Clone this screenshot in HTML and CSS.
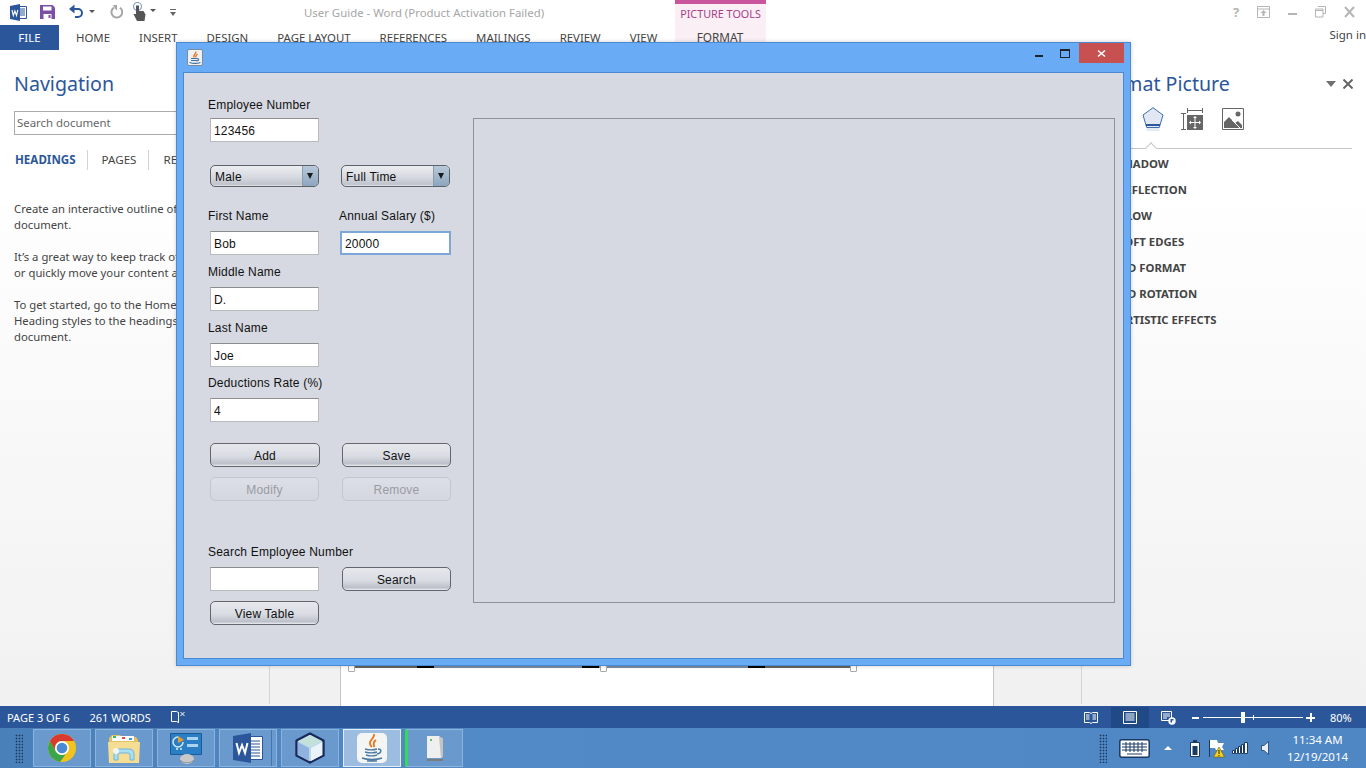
FILE: index.html
```html
<!DOCTYPE html>
<html>
<head>
<title>User Guide - Word</title>
<link rel="stylesheet" href="styles.css">
</head>
<body>

<div class="word">
  <div class="ribbon">
    <div class="ribbonLeft">
      <div class="quickBar">
        <svg class="qaWord" width="17" height="17" viewBox="0 0 17 17"><path fill="#fff" stroke="#2b579a" d="M8.5 2.5h8v12h-8z"/><path stroke="#2b579a" d="M10 5h5M10 7h5M10 9h5M10 11h5"/><path fill="#2b579a" d="M0 2l10-2v17l-10-2z"/><path fill="none" stroke="#fff" stroke-width="1.1" d="M2 6l1.3 5.500 1.600-4.500 1.600 4.500L7.800 6"/></svg>
        <svg class="qaSave" width="15" height="14" viewBox="0 0 15 14"><path fill="#7b4fa6" d="M0 0h12.500L15 2.500V14H0z"/><path fill="#fff" d="M3 1.500h8.500v4H3zM3.500 9h8v5h-8z"/><path fill="#7b4fa6" d="M8.500 10h2v3h-2z"/></svg>
        <svg class="qaUndo" width="15" height="14" viewBox="0 0 15 14"><path fill="none" stroke="#2b579a" stroke-width="2" d="M2 5h7a4 4 0 0 1 0 8H6"/><path fill="#2b579a" d="M5.500 0.500v9L0 5z"/></svg>
        <span class="caret qaCaret1"></span>
        <svg class="qaRedo" width="13" height="14" viewBox="0 0 13 14"><path fill="none" stroke="#a6a6a6" stroke-width="2" d="M4 2.600a5.400 5.400 0 1 0 6 .2"/><path fill="#a6a6a6" d="M3 0h4v5H6z"/></svg>
        <svg class="qaTouch" width="15" height="19" viewBox="0 0 15 19"><circle cx="5.500" cy="4.500" r="4" fill="none" stroke="#8aa3c4" stroke-width="1.200"/><path fill="#555" d="M4 3.500h3V9h4.500l2 3.500-1 6.500H5L1.500 12 4 12z"/></svg>
        <span class="caret qaCaret2"></span>
        <svg class="qaMore" width="6" height="7" viewBox="0 0 6 7"><path fill="#666" d="M0 0h6v1H0zM0 3h6L3 7z"/></svg>
        <div class="docTitle">User Guide - Word (Product Activation Failed)</div>
      </div>
      <div class="tabRow">
        <div class="fileTab">FILE</div>
        <div class="tabs">
          <span>HOME</span><span>INSERT</span><span>DESIGN</span><span>PAGE LAYOUT</span><span>REFERENCES</span><span>MAILINGS</span><span>REVIEW</span><span>VIEW</span>
        </div>
      </div>
    </div>
    <div class="contextTab">
      <div class="contextTitle">PICTURE TOOLS</div>
      <div class="contextFormat">FORMAT</div>
    </div>
    <div class="ribbonRight">
      <div class="windowIcons">
        <span class="helpMark">?</span>
        <svg width="13" height="12" viewBox="0 0 13 12"><path fill="none" stroke="#b5b5b5" d="M.5.500h12v11H.5zM.5 3h12"/><path fill="#b5b5b5" d="M6.500 4l3 3H7.500v3h-2V7H3.500z"/></svg>
        <svg width="9" height="12" viewBox="0 0 9 12"><path fill="#b5b5b5" d="M0 7h9v2H0z"/></svg>
        <svg width="11" height="12" viewBox="0 0 11 12"><path fill="none" stroke="#b5b5b5" d="M3 .500h7.500v7H8M.5 3h7.500v8H.5z"/><path stroke="#b5b5b5" d="M.5 4.500h7.500"/></svg>
        <svg width="11" height="12" viewBox="0 0 11 12"><path stroke="#b5b5b5" stroke-width="2" d="M1 1l9 10M10 1L1 11"/></svg>
      </div>
      <div class="signIn">Sign in</div>
    </div>
  </div>

  <div class="workArea">
    <div class="navPane">
      <div class="paneTitle">Navigation</div>
      <div class="navSearch">Search document</div>
      <div class="navTabs">
        <span class="navTabOn">HEADINGS</span><span class="navTab">PAGES</span><span class="navTab">RE</span>
      </div>
      <p>Create an interactive outline of<br>document.</p>
      <p>It&rsquo;s a great way to keep track of<br>or quickly move your content a</p>
      <p>To get started, go to the Home<br>Heading styles to the headings<br>document.</p>
    </div>

    <div class="docArea">
      <div class="page">
        <div class="pictureEdge">
          <i class="edgeDark e1"></i><i class="edgeBlack"></i><i class="edgeBlue e2"></i><i class="edgeBlack"></i><i class="edgeBlue e3"></i><i class="edgeBlack"></i><i class="edgeDark e4"></i>
          <b class="handle h1"></b><b class="handle h2"></b><b class="handle h3"></b>
        </div>
      </div>
    </div>

    <div class="formatPane">
      <div class="formatHead">
        <div class="paneTitle">Format Picture</div>
        <svg class="paneMenu" width="10" height="6" viewBox="0 0 10 6"><path fill="#707070" d="M0 0h10L5 6z"/></svg>
        <svg class="paneClose" width="10" height="10" viewBox="0 0 10 10"><path stroke="#666" stroke-width="2" d="M.5.500l9 9M9.500.500l-9 9"/></svg>
      </div>
      <div class="formatIcons">
        <svg class="fiShape" width="22" height="24" viewBox="0 0 22 24"><path fill="#e2e8f3" stroke="#3f6cae" d="M11 .7l10 7.300-3.700 12.500H4.700L1 8z"/><path fill="#2b579a" d="M4 17h14v2H4z"/><path fill="#e6ebf3" d="M5 21h12l1 3H4z"/></svg>
        <svg class="fiSize" width="23" height="23" viewBox="0 0 23 23"><path stroke="#666" fill="none" d="M6 2.500h16M6.500 0v5M21.500 0v5M0 5.500h5M0 21.500h5M2.500 5.500v16"/><path fill="#666" d="M6 7h16v15H6z"/><path stroke="#fff" d="M14 9.500v10M9 14.500h10"/><path fill="#fff" d="M14 8l2 2h-4zM14 21l2-2h-4zM8 14.500l2-2v4zM20 14.500l-2-2v4z"/></svg>
        <svg class="fiImage" width="22" height="22" viewBox="0 0 22 22"><path fill="#fff" stroke="#666" d="M.5.500h21v21H.5z"/><circle cx="16" cy="6" r="2.500" fill="#666"/><path fill="#666" d="M2 20v-6l5-5 6 6 3-2 4 4v3z"/><path stroke="#fff" d="M10 12l8 8"/></svg>
      </div>
      <div class="formatRule"><span class="notch"></span></div>
      <div class="formatList">
        <div>SHADOW</div><div>REFLECTION</div><div>GLOW</div><div>SOFT EDGES</div><div>3-D FORMAT</div><div>3-D ROTATION</div><div>ARTISTIC EFFECTS</div>
      </div>
    </div>
  </div>

  <div class="statusBar">
    <span class="statusPage">PAGE 3 OF 6</span>
    <span class="statusWords">261 WORDS</span>
    <svg class="statusBook" width="15" height="14" viewBox="0 0 15 14"><path fill="none" stroke="#fff" d="M.5 1.500h5l2 1v10l-2-1h-5zM7.500 2.500v1M7.500 8v4.500"/><path stroke="#fff" d="M9.500 2l4 4M13.500 2l-4 4"/></svg>
    <div class="statusRight">
      <svg class="viewRead" width="14" height="14" viewBox="0 0 14 14"><path fill="none" stroke="#fff" d="M.5 1.500h5L7 2.500l1.500-1h5v10h-5L7 12.500l-1.500-1h-5zM2 4h3.500M2 6h3.500M2 8h3.500M8.500 4H12M8.500 6H12M8.500 8H12"/></svg>
      <div class="viewPrint"><svg width="14" height="13" viewBox="0 0 14 13"><path fill="none" stroke="#fff" d="M.5.500h13v12H.5zM2.500 3h9M2.500 5h9M2.500 7h9M2.500 9h9"/></svg></div>
      <svg class="viewWeb" width="15" height="14" viewBox="0 0 15 14"><path fill="none" stroke="#fff" d="M.5.500h10v9H.5zM2 3h7M2 5h7M2 7h4"/><circle cx="11" cy="10" r="3.700" fill="#fff"/><path fill="#2b579a" d="M9.500 8h3v1.500h-1.500v2H9.500z"/></svg>
      <span class="zoomMinus"></span>
      <div class="zoomTrack"><span class="zoomTick"></span><span class="zoomThumb"></span></div>
      <span class="zoomPlus"></span>
      <span class="zoomValue">80%</span>
    </div>
  </div>
</div>

<div class="taskbar">
  <div class="grip gripLeft"></div>
  <div class="taskButtons">
    <div class="taskBtn">
      <svg width="28" height="28" viewBox="0 0 28 28"><circle cx="14" cy="14" r="14" fill="#f2c31c"/><path fill="#d9392f" d="M14 0a14 14 0 0 1 12.100 7H14a7 7 0 0 0-6.100 10.500L1.900 7A14 14 0 0 1 14 0z"/><path fill="#3aa54a" d="M1.900 7l6 10.500A7 7 0 0 0 18 19.700l-6 8.200A14 14 0 0 1 1.900 7z"/><circle cx="14" cy="14" r="7" fill="#fff"/><circle cx="14" cy="14" r="5.300" fill="#4a8ad4"/></svg>
    </div>
    <div class="taskBtn">
      <svg width="32" height="30" viewBox="0 0 32 30"><path fill="#e3c165" d="M1 5l3-3h8l2 2h14l2 3v8H1z"/><path fill="#fff" d="M4 3h22v5H4z"/><path fill="#45b455" d="M5 3h3v2H5z"/><path fill="#d9503f" d="M14 4h3v2h-3z"/><path fill="#3d9bd8" d="M21 5h3v2h-3z"/><path fill="#f5dd94" d="M0 9h32l-1 21H1z"/><path fill="#a9dff0" stroke="#6fb6d8" d="M6 27v-6q0-5 5-5h10q5 0 5 5v6h-4v-5q0-2-2-2h-8q-2 0-2 2v5z"/><circle cx="8" cy="18" r="3" fill="#fff" opacity=".8"/></svg>
    </div>
    <div class="taskBtn">
      <svg width="32" height="32" viewBox="0 0 32 32"><path fill="#2a7fc4" stroke="#1c5c96" d="M.5 1.500h31v21H.5z"/><path fill="none" stroke="#d5ecfa" stroke-width="1.500" d="M8 5a5 5 0 1 0 5 5"/><path fill="#f09a2a" d="M8 4l6 4-6 3z"/><path fill="#a8d4f2" d="M17 5h11v3H17zM17 12h11v3H17zM6 16h2v2H6zM10 16h2v2h-2z"/><ellipse cx="17" cy="27" rx="7" ry="5" fill="#c8c8c8"/><path fill="#777" d="M10 28q7 5 14 0v1q-7 4-14 0z"/></svg>
    </div>
    <div class="taskBtn taskBtnStack">
      <svg width="30" height="30" viewBox="0 0 30 30"><path fill="#fff" stroke="#2b579a" d="M14 3.500h15.500v23H14z"/><path stroke="#2b579a" stroke-width="1.200" d="M18 8h9M18 11h9M18 14h9M18 17h9M18 20h9M18 23h9"/><path fill="#2b579a" d="M0 3l18-3v30L0 27z"/><path fill="none" stroke="#fff" stroke-width="2" d="M3.500 10l2.500 10 3-8 3 8 2.500-10"/></svg>
    </div>
    <div class="taskBtn">
      <svg width="32" height="32" viewBox="0 0 32 32"><path fill="#bcd9e6" stroke="#1a2a5c" stroke-width="2.400" stroke-linejoin="round" d="M16 1.500l13.500 7v15L16 30.500l-13.500-7v-15z"/><path fill="#c4e0da" d="M16 3l11.500 6L16 15 4.500 9z"/><path fill="#8fb2e0" d="M3.700 10L15 16v13L3.700 23z"/><path fill="#eaf2fa" d="M17 16l11.300-6v13L17 29z"/></svg>
    </div>
    <div class="taskBtn taskBtnActive">
      <div class="javaTile">
        <svg width="22" height="30" viewBox="0 0 22 30"><path fill="none" stroke="#e8761f" stroke-width="1.800" d="M13 1c1 4-5 6-4 10 .4 1.500 1.500 2.500 2 3M15 7c-3 2-3 4-1.500 7"/><path fill="none" stroke="#4c7ba4" stroke-width="1.400" d="M4 16c4 1 9 1 12 0M4 19c4 1 9 1 12 0M17 16c4 0 4 4-1 5M5 22c3 1 8 1 11 0M1 25c5 2 15 2 20 0M6 28h10"/></svg>
      </div>
    </div>
    <div class="taskBtn taskBtnOpen">
      <svg width="20" height="26" viewBox="0 0 20 26"><path fill="#7c7c7c" d="M2 24h16v2H2z"/><path fill="#efefef" d="M2 1h12l2 2v20H2z"/><path fill="#c4c4c4" d="M14 2l4 1v19l-2 1z"/><path fill="#60c070" d="M5 4h2v2H5z"/></svg>
    </div>
  </div>
  <div class="trayArea">
    <div class="grip"></div>
    <svg class="trayKeys" width="31" height="19" viewBox="0 0 31 19"><rect x=".8" y=".8" width="29.400" height="17.400" rx="2" fill="#fff" stroke="#1b3a63" stroke-width="1.500"/><path stroke="#1b3a63" d="M3 5h25M3 8h25M3 11h25M7 3v10M11 3v10M15 3v10M19 3v10M23 3v10M8 15h15"/></svg>
    <span class="trayCaret"></span>
    <svg class="trayBattery" width="10" height="17" viewBox="0 0 10 17"><path fill="#fff" stroke="#1b3a63" d="M.5 2.500h9v14h-9z"/><path fill="#1b3a63" d="M3 0h4v2H3zM2.500 6h5v9h-5z"/></svg>
    <svg class="trayFlag" width="17" height="19" viewBox="0 0 17 19"><path fill="#fff" stroke="#1b3a63" d="M1.500 1v17"/><path fill="#fff" d="M2 1h7l1 3h6l-2 4 2 3H8l-1-2H2z"/><path fill="#f5d21f" stroke="#6b5a10" stroke-width=".6" d="M11 8l5.500 10H5.500z"/><path stroke="#222" d="M11 11v4M11 16v1.200"/></svg>
    <svg class="traySignal" width="16" height="12" viewBox="0 0 16 12"><path fill="#fff" stroke="#1b3a63" d="M.5 8.500h2v3h-2zM3.500 6.500h2v5h-2zM6.500 4.500h2v7h-2zM9.500 2.500h2v9h-2zM12.500.5h3v11h-3z"/></svg>
    <svg class="traySpeaker" width="8" height="14" viewBox="0 0 8 14"><path fill="#e8eef5" stroke="#1b3a63" stroke-width=".8" d="M.5 4.500H3L7.500.5v13L3 9.500H.5z"/></svg>
    <div class="clock">11:34 AM<br>12/19/2014</div>
  </div>
</div>

<div class="javaWindow">
  <div class="javaTitle">
    <div class="javaIcon">
      <svg width="12" height="13" viewBox="0 0 12 13"><path fill="none" stroke="#e8761f" stroke-width="1.300" d="M7 .5C7 3 4 3.500 5 6.500M8.500 3C7 4 6.500 5 7 6.500"/><path fill="none" stroke="#3f6f9c" stroke-width="1.100" d="M2 7.500h6M2 9.500h6M8 7.500c2.500 0 2 2-.5 2.500M.5 11.500c3 1 8 1 11 0"/></svg>
    </div>
    <div class="javaControls">
      <span class="ctlMin"></span>
      <span class="ctlMax"></span>
      <div class="ctlClose">
        <svg width="9" height="9" viewBox="0 0 9 9"><path stroke="#fff" stroke-width="1.600" d="M1 1.500l7 6M8 1.500l-7 6"/></svg>
      </div>
    </div>
  </div>

  <div class="javaContent">
    <div class="empForm">
      <div class="lbl">Employee Number</div>
      <div class="field gapInput">123456</div>

      <div class="row gapCombo">
        <div class="combo"><span class="comboText">Male</span><span class="comboArrow"></span></div>
        <div class="combo"><span class="comboText">Full Time</span><span class="comboArrow"></span></div>
      </div>

      <div class="row gapSalary">
        <div class="lbl cell">First Name</div>
        <div class="lbl cell cellRight">Annual Salary ($)</div>
      </div>
      <div class="row gapInputBig">
        <div class="field">Bob</div>
        <div class="field fieldFocus">20000</div>
      </div>

      <div class="lbl gapLabel">Middle Name</div>
      <div class="field gapInputBig">D.</div>

      <div class="lbl gapLabel">Last Name</div>
      <div class="field gapInputBig">Joe</div>

      <div class="lbl gapLabelTight">Deductions Rate (%)</div>
      <div class="field gapInputBig">4</div>

      <div class="row gapAdd">
        <button class="btn btnAdd">Add</button>
        <button class="btn">Save</button>
      </div>
      <div class="row rowWide gapBtn">
        <button class="btn btnOff">Modify</button>
        <button class="btn btnOff">Remove</button>
      </div>

      <div class="lbl gapSearch">Search Employee Number</div>
      <div class="row rowWide gapInputBig">
        <div class="field"></div>
        <button class="btn">Search</button>
      </div>
      <button class="btn gapBtn">View Table</button>
    </div>

    <div class="tablePanel"></div>
  </div>
</div>

</body>
</html>
```

FILE: styles.css
```css
html, body {
	margin: 0;
	padding: 0;
}

body {
	position: relative;
	width: 1366px;
	height: 768px;
	overflow: hidden;
	font-family: "Noto Sans", sans-serif;
	background-color: #fff;
}

.word {
	display: flex;
	flex-direction: column;
	height: 728px;
}

/* ribbon */
.ribbon {
	display: flex;
	height: 50px;
	font-size: 11.5px;
	color: #444;
}
.ribbonLeft { width: 675px; }
.quickBar {
	position: relative;
	height: 25px;
}
.quickBar svg, .quickBar .caret { position: absolute; }
.qaWord { left: 10px; top: 4px; }
.qaSave { left: 40px; top: 5px; }
.qaUndo { left: 69px; top: 4px; }
.qaCaret1 { left: 89px; top: 10px; }
.qaRedo { left: 110px; top: 5px; }
.qaTouch { left: 132px; top: 2px; }
.qaCaret2 { left: 150px; top: 9px; }
.qaMore { left: 170px; top: 9px; }
.caret {
	width: 0;
	height: 0;
	border-left: 3px solid transparent;
	border-right: 3px solid transparent;
	border-top: 3px solid #555;
}
.docTitle {
	position: absolute;
	left: 304px;
	top: 4px;
	font-size: 11.4px;
	line-height: 18px;
	color: #a6a6a6;
	white-space: nowrap;
}
.tabRow {
	display: flex;
	height: 25px;
	line-height: 25px;
}
.fileTab {
	width: 59px;
	text-align: center;
	color: #fff;
	background-color: #2b579a;
}
.tabs {
	display: flex;
	gap: 29px;
	margin-left: 17px;
	font-size: 11.4px;
	white-space: nowrap;
}
.contextTab {
	width: 91px;
	text-align: center;
	background-color: #faeff5;
	border-top: 4px solid #c9559d;
	box-sizing: border-box;
}
.contextTitle {
	height: 21px;
	line-height: 20px;
	font-size: 10.8px;
	color: #ab3d88;
}
.contextFormat {
	line-height: 25px;
	margin-left: -1px;
	font-size: 11.8px;
}
.ribbonRight { flex: 1; }
.windowIcons {
	display: flex;
	align-items: center;
	gap: 18px;
	height: 24px;
	margin-left: 465px;
}
.helpMark {
	width: 10px;
	font-size: 13px;
	font-weight: bold;
	text-align: center;
	color: #b5b5b5;
	margin-right: -2px;
}
.signIn {
	text-align: right;
	line-height: 22px;
	color: #444;
	white-space: nowrap;
}

/* panes */
.workArea {
	flex: 1;
	display: flex;
	min-height: 0;
}
.navPane {
	box-sizing: border-box;
	width: 269px;
	padding: 21px 0 0 14px;
	background: linear-gradient(#fff 20%, #f1f1f1);
	color: #444;
	font-size: 11.3px;
	line-height: 16px;
	white-space: nowrap;
	overflow: hidden;
}
.navPane p { margin: 0 0 16px 0; }
.paneTitle {
	font-size: 19.6px;
	line-height: 26px;
	color: #2b579a;
	white-space: nowrap;
}
.navSearch {
	box-sizing: border-box;
	width: 240px;
	height: 24px;
	margin-top: 14px;
	padding-left: 2px;
	line-height: 22px;
	font-size: 11.4px;
	color: #666;
	background-color: #fff;
	border: 1px solid #ababab;
}
.navTabs {
	display: flex;
	height: 20px;
	margin: 15px 0 31px 1px;
	line-height: 20px;
	font-size: 11.6px;
}
.navTabOn {
	font-weight: bold;
	color: #2b579a;
	padding-right: 11px;
}
.navTab {
	padding: 0 12px 0 14px;
	border-left: 1px solid #d4d4d4;
}
.docArea {
	width: 813px;
	padding-left: 71px;
	box-sizing: border-box;
	background:
		linear-gradient(#d4d4d4, #d4d4d4) left top / 1px calc(100% - 2px) no-repeat,
		linear-gradient(#d4d4d4, #d4d4d4) right top / 1px calc(100% - 2px) no-repeat,
		#f1f1f1;
}
.page {
	box-sizing: border-box;
	width: 654px;
	height: 656px;
	padding-top: 615px;
	background-color: #fff;
	border-left: 1px solid #c6c6c6;
	border-right: 1px solid #c6c6c6;
}
.pictureEdge {
	position: relative;
	display: flex;
	height: 3px;
	margin-left: 14px;
	width: 496px;
}
.pictureEdge i { display: block; height: 3px; }
.edgeDark { background-color: #66625e; }
.edgeBlue { background-color: #7a8ea6; }
.edgeBlack { background-color: #000; width: 17px; }
.e1 { width: 62px; }
.e2 { width: 148px; }
.e3 { width: 149px; }
.e4 { width: 86px; }
.handle {
	position: absolute;
	top: 0;
	width: 5px;
	height: 5px;
	background-color: #fff;
	border: 1px solid #a9a9a9;
	border-radius: 1px;
}
.h1 { left: -7px; }
.h2 { left: 245px; }
.h3 { left: 495px; }

.formatPane {
	flex: 1;
	box-sizing: border-box;
	padding-top: 21px;
	background: linear-gradient(#fff 20%, #f1f1f1);
	overflow: hidden;
}
.formatHead {
	display: flex;
	align-items: center;
	padding-left: 12px;
	height: 26px;
}
.paneMenu { margin-left: 96px; }
.paneClose { margin-left: 7px; }
.formatIcons {
	display: flex;
	height: 24px;
	margin: 10px 0 0 60px;
}
.fiSize { margin: 1px 0 0 17px; }
.fiImage { margin: 1px 0 0 18px; }
.formatRule {
	position: relative;
	height: 1px;
	margin: 17px 14px 0 40px;
	background-color: #c6c6c6;
}
.notch {
	position: absolute;
	left: 25px;
	top: -4px;
	width: 7px;
	height: 7px;
	background-color: #fff;
	border-left: 1px solid #c6c6c6;
	border-top: 1px solid #c6c6c6;
	transform: rotate(45deg);
}
.formatList {
	padding: 2px 0 0 36px;
	font-size: 11.3px;
	font-weight: bold;
	line-height: 26px;
	color: #444;
	white-space: nowrap;
}

/* status bar */
.statusBar {
	display: flex;
	align-items: center;
	height: 22px;
	font-size: 11px;
	color: #fff;
	background-color: #2b579a;
	white-space: nowrap;
}
.statusPage { margin-left: 7px; }
.statusWords { margin-left: 20px; }
.statusBook { margin-left: 20px; }
.statusRight {
	display: flex;
	align-items: center;
	height: 21px;
	margin-left: auto;
	margin-top: 1px;
}
.viewPrint {
	display: flex;
	align-items: center;
	justify-content: center;
	width: 38px;
	height: 21px;
	margin: 0 12px 0 13px;
	background-color: #1f4a87;
}
.zoomMinus {
	width: 7px;
	height: 2px;
	margin-left: 16px;
	background-color: #fff;
}
.zoomTrack {
	position: relative;
	width: 100px;
	height: 1px;
	margin-left: 4px;
	background-color: #fff;
}
.zoomThumb {
	position: absolute;
	left: 38px;
	top: -5px;
	width: 4px;
	height: 11px;
	background-color: #fff;
}
.zoomTick {
	position: absolute;
	left: 50px;
	top: -2px;
	width: 1px;
	height: 5px;
	background-color: #fff;
}
.zoomPlus {
	position: relative;
	width: 9px;
	height: 2px;
	margin-left: 3px;
	background-color: #fff;
}
.zoomPlus::after {
	content: "";
	position: absolute;
	left: 3.500px;
	top: -3.500px;
	width: 2px;
	height: 9px;
	background-color: #fff;
}
.zoomValue {
	width: 36px;
	margin-left: 15px;
}

/* taskbar */
.taskbar {
	display: flex;
	align-items: center;
	height: 40px;
	background: linear-gradient(90deg, #4a80b9, #528ac8 35%, #4f87c4);
}
.grip {
	width: 8px;
	height: 29px;
	background-image: radial-gradient(circle, #1d3a5c 0.8px, transparent 1.100px);
	background-size: 3px 3px;
}
.gripLeft { margin-left: 15px; }
.taskButtons {
	display: flex;
	gap: 4px;
	margin-left: 10px;
}
.taskBtn {
	box-sizing: border-box;
	display: flex;
	align-items: center;
	justify-content: center;
	width: 58px;
	height: 38px;
	background-color: #6a9acd;
	border: 1px solid #8db3da;
}
.taskBtnStack {
	box-shadow: inset -4px 0 0 #6a9acd, inset -5px 0 0 #3f76b2;
}
.taskBtnActive {
	background-color: #9dbde0;
	border: 1px solid #e4eef8;
}
.taskBtnOpen { border-left: 3px solid #34d957; }
.javaTile {
	display: flex;
	align-items: center;
	justify-content: center;
	width: 30px;
	height: 30px;
	background-color: #f5f5f3;
	border-radius: 5px;
}
.trayArea {
	display: flex;
	align-items: center;
	margin-left: auto;
	height: 40px;
}
.trayKeys { margin-left: 12px; }
.trayCaret {
	width: 0;
	height: 0;
	margin: 0 18px 0 14px;
	border-left: 4px solid transparent;
	border-right: 4px solid transparent;
	border-bottom: 4px solid #fff;
}
.trayFlag { margin-left: 8px; }
.traySignal { margin-left: 7px; }
.traySpeaker { margin-left: 13px; }
.clock {
	width: 97px;
	text-align: center;
	font-size: 11.5px;
	line-height: 17px;
	color: #fff;
	white-space: nowrap;
}

/* java window, floats over the desktop */
.javaWindow {
	position: absolute;
	left: 176px;
	top: 42px;
	box-sizing: border-box;
	width: 955px;
	height: 624px;
	padding: 0 6px 6px 6px;
	background-color: #6aabf5;
	border: 1px solid #4a8ad0;
	box-shadow: 0 0 4px rgba(0, 0, 0, 0.2);
}
.javaTitle {
	display: flex;
	align-items: flex-start;
	height: 29px;
}
.javaIcon {
	display: flex;
	align-items: center;
	justify-content: center;
	width: 14px;
	height: 15px;
	margin: 6px 0 0 4px;
	background-color: #eef1f4;
	border: 1px solid #7d8b9c;
	border-radius: 2px;
}
.javaControls {
	display: flex;
	align-items: flex-start;
	margin-left: auto;
}
.ctlMin {
	width: 8px;
	height: 2px;
	margin-top: 12px;
	background-color: #1c2430;
}
.ctlMax {
	box-sizing: border-box;
	width: 10px;
	height: 9px;
	margin: 6px 9px 0 17px;
	border: 1px solid #1c2430;
	border-top-width: 2px;
}
.ctlClose {
	display: flex;
	align-items: center;
	justify-content: center;
	width: 45px;
	height: 20px;
	background-color: #c75050;
}
.javaContent {
	display: flex;
	align-items: flex-start;
	box-sizing: border-box;
	height: 587px;
	padding: 23px 0 0 26px;
	background-color: #d6d9e2;
	border: 1px solid #4a8ad0;
	font-family: "Liberation Sans", sans-serif;
	font-size: 12px;
	color: #111;
}
.empForm {
	display: flex;
	flex-direction: column;
	align-items: flex-start;
	width: 241px;
}
.row {
	display: flex;
	gap: 22px;
}
.rowWide { gap: 23px; }
.lbl {
	height: 16px;
	margin-left: -2px;
	line-height: 18px;
	letter-spacing: 0.2px;
	white-space: nowrap;
}
.cell { width: 109px; }
.cellRight { margin-left: 0; }
.field {
	box-sizing: border-box;
	width: 109px;
	height: 24px;
	padding-left: 3px;
	line-height: 24px;
	letter-spacing: 0.2px;
	background-color: #fff;
	border: 1px solid #b8babc;
	border-top-color: #8c8e91;
}
.fieldFocus {
	width: 111px;
	margin-left: -1px;
	padding-left: 3px;
	border: 2px solid #7da7d6;
	line-height: 22px;
}
.combo {
	display: flex;
	justify-content: space-between;
	box-sizing: border-box;
	width: 109px;
	height: 22px;
	background: linear-gradient(#eceef1, #d4d7de 60%, #bfc3cb 92%, #e8eaee);
	border: 1px solid #5d6168;
	border-radius: 5px;
}
.comboText {
	padding-left: 4px;
	line-height: 23px;
	letter-spacing: 0.2px;
}
.comboArrow {
	position: relative;
	width: 15px;
	border-radius: 0 4px 4px 0;
	background: linear-gradient(#b8c9d9, #8ca6bf);
	border-left: 1px solid #8d9cab;
}
.comboArrow::after {
	content: "";
	position: absolute;
	left: 4px;
	top: 7px;
	width: 0;
	height: 0;
	border-left: 3.500px solid transparent;
	border-right: 3.500px solid transparent;
	border-top: 6px solid #1a1a1a;
}
.btn {
	box-sizing: border-box;
	display: block;
	width: 109px;
	height: 24px;
	padding: 2px 0 0 0;
	font-family: "Liberation Sans", sans-serif;
	font-size: 12px;
	letter-spacing: 0.2px;
	color: #111;
	background: linear-gradient(#e6e8ec, #d9dce3 55%, #bcc0c9 90%, #eceef1);
	border: 1px solid #63666c;
	border-radius: 5px;
}
.btnAdd { width: 110px; }
.btnOff {
	color: #9a9ba3;
	background: linear-gradient(#dcdfe6, #d4d7df);
	border-color: #c3c6ce;
}
.gapInput { margin-top: 6px; }
.gapCombo { margin-top: 23px; }
.gapSalary { margin-top: 20px; }
.gapInputBig { margin-top: 8px; }
.gapLabel { margin-top: 8px; }
.gapLabelTight { margin-top: 7px; }
.gapAdd { margin-top: 21px; }
.gapBtn { margin-top: 10px; }
.gapSearch { margin-top: 42px; }
.tablePanel {
	box-sizing: border-box;
	width: 642px;
	height: 485px;
	margin: 22px 0 0 22px;
	border: 1px solid #8f9296;
}
```
